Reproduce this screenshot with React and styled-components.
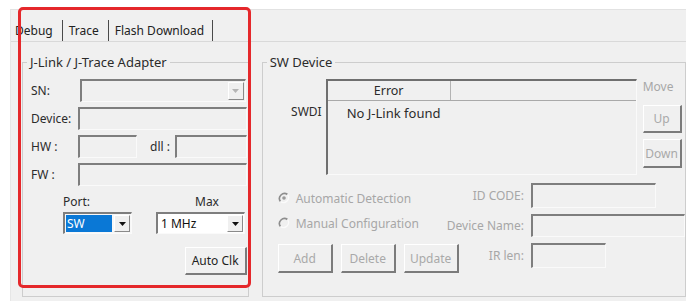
import React from 'react';
import styled, { createGlobalStyle } from 'styled-components';

const Global = createGlobalStyle`
  html, body { margin: 0; padding: 0; background: #fff; }
  body { font-family: "Noto Sans", "Segoe UI", sans-serif; font-size: 12px; color: #2b2b2b; }
  * { box-sizing: border-box; }
`;

const Page = styled.div`
  width: 693px;
  height: 301px;
  padding: 9px 0 0 10px;
  overflow: hidden;
`;

const Window = styled.div`
  position: relative;
  width: 676px;
  height: 292px;
  background: #f0f0f0;
  border-top: 1px solid #e2e2e2;
  border-left: 1px solid #e6e6e6;
`;

const Highlight = styled.div`
  position: absolute;
  left: 7px;
  top: -3px;
  width: 233px;
  height: 281px;
  border: 3px solid #e5282b;
  border-radius: 5px;
  pointer-events: none;
`;

const TabStrip = styled.div`
  display: flex;
  height: 32px;
  padding: 10px 0 0 4px;
  border-bottom: 1px solid #d9d9d9;
`;

const Tab = styled.div`
  padding: 0 ${p => (p.$last ? 8 : 9)}px 0 ${p => (p.$first ? 0 : 6)}px;
  line-height: 21px;
  font-size: 12px;
  color: #222;
  border-right: 1px solid #4a4a4a;
`;

const Body = styled.div`
  display: flex;
  gap: 13px;
  padding: 12px 0 0 11px;
`;

const Group = styled.fieldset`
  margin: 0;
  padding: 0;
  min-width: 0;
  width: ${p => p.$w}px;
  height: 243px;
  border: 1px solid #cdcdcd;
`;

const Legend = styled.legend`
  margin-left: 4px;
  padding: 0 3px;
  line-height: 16px;
  font-size: 13px;
  color: #2b2b2b;
`;

const LeftContent = styled.div`
  padding: 9px 1px 0 8px;
`;

const FormGrid = styled.div`
  display: grid;
  grid-template-columns: 47px 1fr;
  grid-auto-rows: 23px;
  row-gap: 5px;
  align-items: center;
`;

const Label = styled.span`
  line-height: 16px;
  white-space: nowrap;
  color: ${p => (p.$disabled ? '#a7a7a7' : '#2b2b2b')};
`;

const Sunken = styled.div`
  display: flex;
  align-items: stretch;
  height: ${p => p.$h || 23}px;
  width: ${p => (p.$w ? `${p.$w}px` : 'auto')};
  flex: ${p => (p.$w ? 'none' : '1')};
  margin: ${p => p.$m || '0'};
  background: ${p => p.$bg || '#f0f0f0'};
  border-top: 2px solid #7e7e7e;
  border-left: 2px solid #7e7e7e;
  border-right: 1px solid #fafafa;
  border-bottom: 1px solid #fafafa;
`;

const Pair = styled.div`
  display: flex;
  align-items: center;
  height: 23px;
`;

const InlineLabel = styled.span`
  margin: 0 5px 0 13px;
  line-height: 16px;
`;

const DropButton = styled.span`
  width: 16px;
  display: flex;
  align-items: center;
  justify-content: center;
  background: #f0f0f0;
  border-top: 1px solid #fff;
  border-left: 1px solid #fff;
  border-right: 1px solid #8a8a8a;
  border-bottom: 1px solid #8a8a8a;
  margin: 1px 1px 1px auto;
`;

const Arrow = ({ color }) => (
  <svg width="7" height="4" viewBox="0 0 7 4">
    <polygon points="0,0 7,0 3.5,4" fill={color} />
  </svg>
);

const Selected = styled.span`
  width: 46px;
  margin: 1px;
  padding-left: 1px;
  background: #0a78d6;
  color: #fff;
  line-height: 17px;
`;

const ComboText = styled.span`
  padding-left: 3px;
  line-height: 19px;
  color: #111;
`;

const PortRow = styled.div`
  display: flex;
  gap: 24px;
  margin-top: 8px;
  padding-left: 32px;
`;

const PortCol = styled.div`
  display: flex;
  flex-direction: column;
  width: ${p => p.$w}px;
`;

const ColLabel = styled.span`
  line-height: 16px;
  margin-bottom: 2px;
  padding-left: ${p => p.$pad || 0}px;
`;

const Raised = styled.button`
  font: inherit;
  font-size: 12px;
  width: ${p => p.$w}px;
  height: ${p => p.$h}px;
  flex: none;
  padding: 0;
  background: #f0f0f0;
  color: ${p => (p.$disabled ? '#a9a9a9' : '#1e1e1e')};
  border-top: 1px solid #ffffff;
  border-left: 1px solid #ffffff;
  border-right: 2px solid #7b7b7b;
  border-bottom: 2px solid #7b7b7b;
  border-radius: 0;
  margin-top: ${p => p.$mt || 0}px;
`;

const AutoRow = styled.div`
  display: flex;
  justify-content: flex-end;
  margin-top: 13px;
`;

const RightContent = styled.div`
  padding: 9px 0 0 15px;
`;

const TopRow = styled.div`
  display: flex;
  align-items: flex-start;
`;

const SwdLabel = styled.span`
  width: 48px;
  padding: 25px 4px 0 0;
  text-align: right;
  line-height: 16px;
`;

const List = styled.div`
  width: 311px;
  height: 96px;
  background: #f0f0f0;
  border-top: 2px solid #6f6f6f;
  border-left: 2px solid #6f6f6f;
  border-right: 1px solid #fafafa;
  border-bottom: 1px solid #fafafa;
`;

const ListHeader = styled.div`
  display: flex;
  height: 20px;
  border-bottom: 1px solid #a9a9a9;
`;

const HeaderCell = styled.div`
  width: ${p => p.$w}px;
  text-align: center;
  line-height: 19px;
  font-size: 12.5px;
  border-right: 1px solid #b3b3b3;
`;

const ListRow = styled.div`
  padding: 4px 0 0 19px;
  line-height: 16px;
  font-size: 13px;
`;

const Side = styled.div`
  display: flex;
  flex-direction: column;
  margin-left: 6px;
`;

const BottomRow = styled.div`
  display: flex;
  margin-top: 8px;
`;

const LeftCol = styled.div`
  flex: 1;
  min-width: 0;
  display: flex;
  flex-direction: column;
  gap: 9px;
  padding-top: 7px;
`;

const Radio = styled.div`
  display: flex;
  align-items: center;
  gap: 6px;
  height: 16px;
  color: #a7a7a7;
  white-space: nowrap;
`;

const ButtonRow = styled.div`
  display: flex;
  gap: 8px;
  margin-top: 4px;
`;

const RightGrid = styled.div`
  flex: none;
  display: grid;
  grid-template-columns: 86px 154px;
  grid-auto-rows: 25px;
  row-gap: 5px;
  align-items: center;
`;

const GridLabel = styled.span`
  text-align: right;
  padding-right: 7px;
  line-height: 16px;
  color: #a7a7a7;
  white-space: nowrap;
`;

const RadioIcon = ({ checked }) => (
  <svg width="12" height="12" viewBox="0 0 12 12">
    <path d="M9.5 2.5 A5 5 0 0 0 2.5 9.5" stroke="#8d8d8d" strokeWidth="1.6" fill="none" />
    <path d="M9.5 2.5 A5 5 0 0 1 2.5 9.5" stroke="#fbfbfb" strokeWidth="1.2" fill="none" />
    {checked && <circle cx="6" cy="6" r="1.8" fill="#9a9a9a" />}
  </svg>
);

export default function App() {
  return (
    <>
      <Global />
      <Page>
        <Window>
          <TabStrip>
            <Tab $first>Debug</Tab>
            <Tab>Trace</Tab>
            <Tab $last>Flash Download</Tab>
          </TabStrip>
          <Body>
            <Group $w={227}>
              <Legend>J-Link / J-Trace Adapter</Legend>
              <LeftContent>
                <FormGrid>
                  <Label>SN:</Label>
                  <Sunken $m="0 1px 0 2px">
                    <DropButton>
                      <Arrow color="#b5b5b5" />
                    </DropButton>
                  </Sunken>
                  <Label>Device:</Label>
                  <Sunken />
                  <Label>HW :</Label>
                  <Pair>
                    <Sunken $w={59} />
                    <InlineLabel>dll :</InlineLabel>
                    <Sunken />
                  </Pair>
                  <Label>FW :</Label>
                  <Sunken />
                </FormGrid>
                <PortRow>
                  <PortCol $w={69}>
                    <ColLabel>Port:</ColLabel>
                    <Sunken $bg="#f7f7f7">
                      <Selected>SW</Selected>
                      <DropButton>
                        <Arrow color="#111" />
                      </DropButton>
                    </Sunken>
                  </PortCol>
                  <PortCol $w={89}>
                    <ColLabel $pad={39}>Max</ColLabel>
                    <Sunken $bg="#ffffff">
                      <ComboText>1 MHz</ComboText>
                      <DropButton>
                        <Arrow color="#111" />
                      </DropButton>
                    </Sunken>
                  </PortCol>
                </PortRow>
                <AutoRow>
                  <Raised $w={62} $h={28}>Auto Clk</Raised>
                </AutoRow>
              </LeftContent>
            </Group>
            <Group $w={425}>
              <Legend>SW Device</Legend>
              <RightContent>
                <TopRow>
                  <SwdLabel>SWDI</SwdLabel>
                  <List>
                    <ListHeader>
                      <HeaderCell $w={123}>Error</HeaderCell>
                    </ListHeader>
                    <ListRow>No J-Link found</ListRow>
                  </List>
                  <Side>
                    <Label $disabled>Move</Label>
                    <Raised $w={39} $h={28} $mt={10} $disabled>Up</Raised>
                    <Raised $w={39} $h={29} $mt={6} $disabled>Down</Raised>
                  </Side>
                </TopRow>
                <BottomRow>
                  <LeftCol>
                    <Radio>
                      <RadioIcon checked />
                      Automatic Detection
                    </Radio>
                    <Radio>
                      <RadioIcon />
                      Manual Configuration
                    </Radio>
                    <ButtonRow>
                      <Raised $w={55} $h={29} $disabled>Add</Raised>
                      <Raised $w={55} $h={29} $disabled>Delete</Raised>
                      <Raised $w={55} $h={29} $disabled>Update</Raised>
                    </ButtonRow>
                  </LeftCol>
                  <RightGrid>
                    <GridLabel>ID CODE:</GridLabel>
                    <Sunken $w={125} $h={25} />
                    <GridLabel>Device Name:</GridLabel>
                    <Sunken $w={154} $h={23} />
                    <GridLabel>IR len:</GridLabel>
                    <Sunken $w={75} $h={25} />
                  </RightGrid>
                </BottomRow>
              </RightContent>
            </Group>
          </Body>
          <Highlight />
        </Window>
      </Page>
    </>
  );
}
